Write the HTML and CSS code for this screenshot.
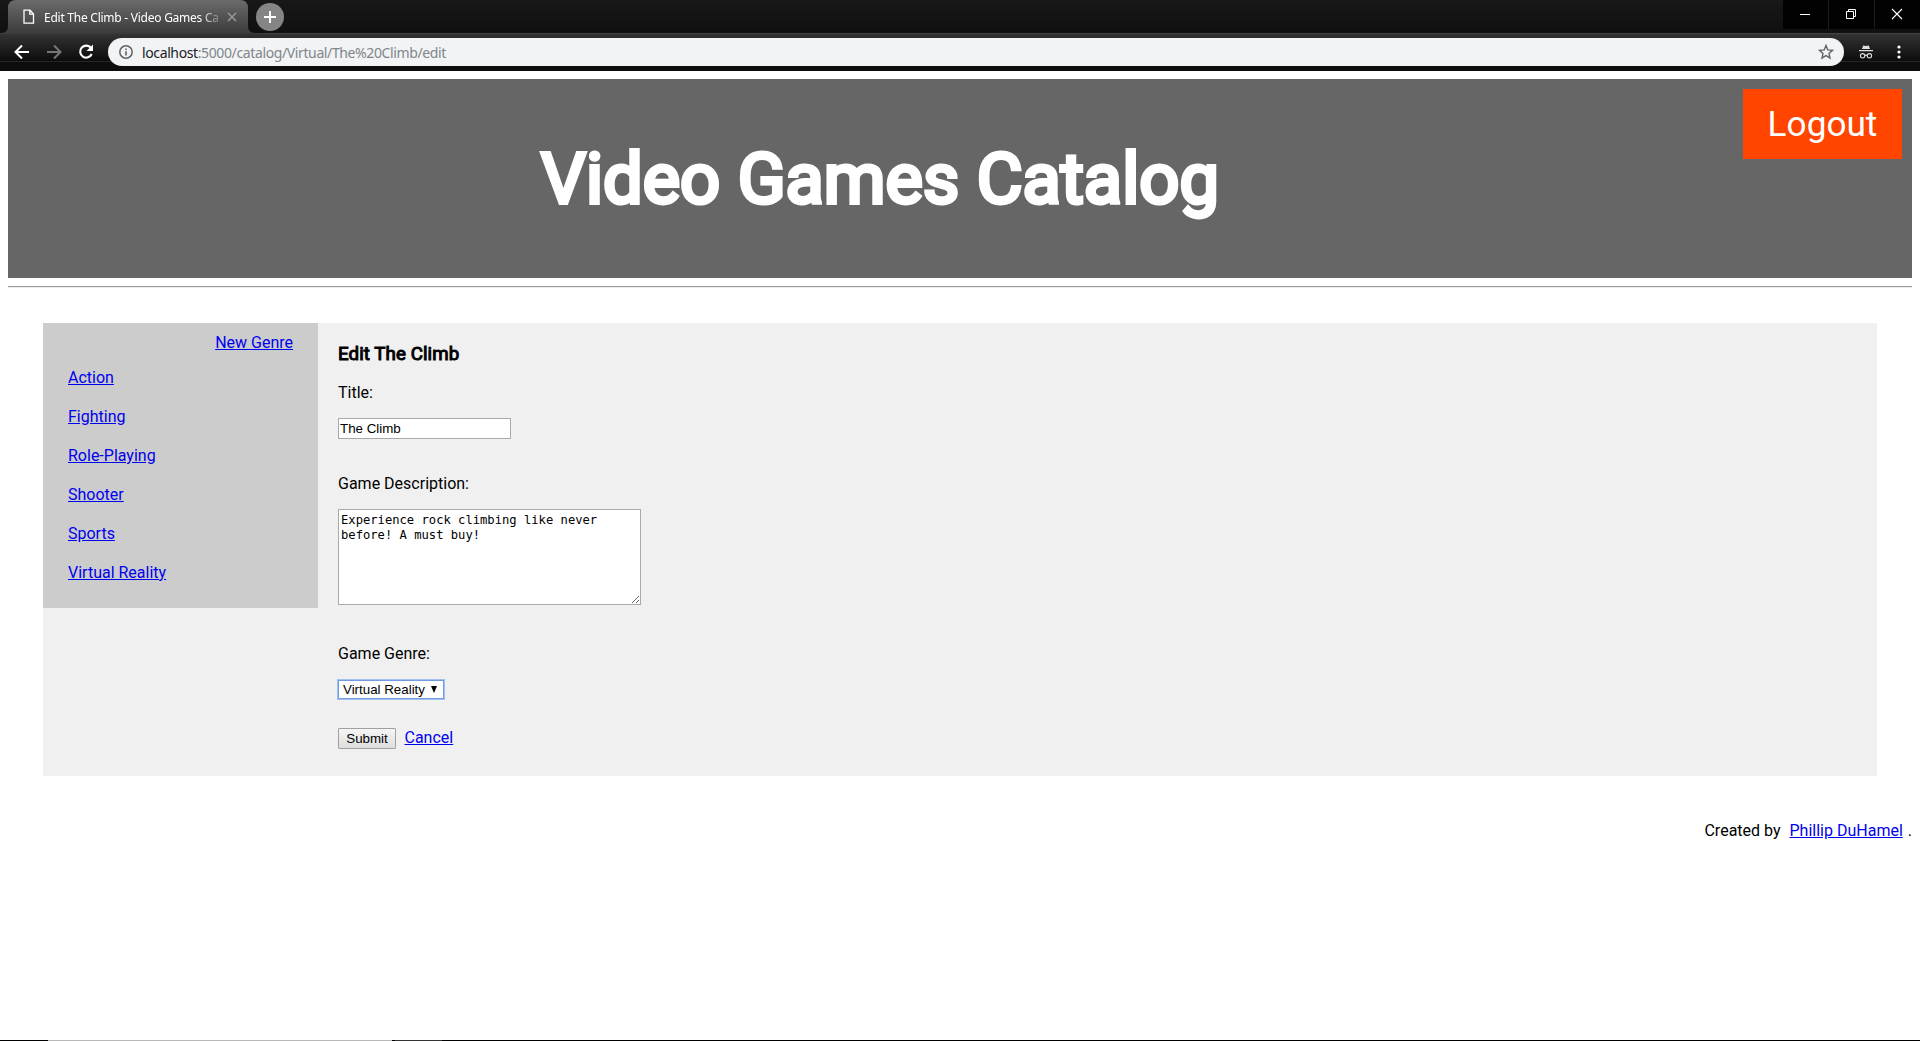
FILE: index.html
```html
<!DOCTYPE html>
<html lang="en">
<head>
<meta charset="utf-8">
<title>Edit The Climb - Video Games Catalog</title>
<link rel="stylesheet" href="styles.css">
</head>
<body>
<div class="browser">
  <div class="tabs">
    <div class="tab">
      <svg class="tab-edge" width="264" height="34" viewBox="0 0 264 34">
        <defs><linearGradient id="tabfill" x1="0" y1="0" x2="0" y2="1"><stop offset="0" stop-color="#6b6b6b"/><stop offset="1" stop-color="#3a3a3a"/></linearGradient></defs>
        <path d="M0 33H1Q8 33 8 26V8Q8 0 16 0H240Q248 0 248 8V26Q248 33 255 33H264V34H0Z" fill="url(#tabfill)"/>
      </svg>
      <svg class="tab-file" width="12" height="16" viewBox="0 0 12 16" fill="none" stroke="#fff" stroke-width="1.3"><path d="M1 1.2H7L10.5 5V14.2H1ZM6.8 1.2V5.2H10.5"/></svg>
      <span class="tab-title">Edit The Climb - Video Games Ca</span>
      <svg class="tab-close" width="10" height="10" viewBox="0 0 10 10" stroke="#999" stroke-width="1.5"><path d="M1 1L9 9M9 1L1 9"/></svg>
    </div>
    <svg class="new-tab" width="28" height="28" viewBox="0 0 28 28"><circle cx="14" cy="14" r="14" fill="#858585"/><path d="M14 8V20M8 14H20" stroke="#fff" stroke-width="2"/></svg>
    <div class="window-buttons">
      <svg width="45" height="29" viewBox="0 0 45 29" stroke="#fff"><path d="M17 14.5H27"/></svg>
      <svg width="45" height="29" viewBox="0 0 45 29" stroke="#fff" fill="none"><path d="M17.500 11.500H24.500V18.500H17.500ZM19.500 11.500V9.500H26.500V16.500H24.500"/></svg>
      <svg width="45" height="29" viewBox="0 0 45 29" stroke="#fff" stroke-width="1.100"><path d="M17 9L27 19M27 9L17 19"/></svg>
    </div>
  </div>
  <div class="toolbar">
    <svg class="back" width="16" height="16" viewBox="0 0 16 16" fill="none" stroke="#fff" stroke-width="2"><path d="M15 8H2M8 1.500L1.500 8L8 14.500"/></svg>
    <svg class="forward" width="16" height="16" viewBox="0 0 16 16" fill="none" stroke="#777" stroke-width="2"><path d="M1 8H14M8 1.500L14.500 8L8 14.500"/></svg>
    <svg class="reload" width="16" height="16" viewBox="0 0 16 16"><path d="M13 4A6 6 0 1 0 13.700 10" fill="none" stroke="#fff" stroke-width="2.100"/><path d="M15 0.500V7H8.500Z" fill="#fff"/></svg>
    <div class="address">
      <svg width="14" height="14" viewBox="0 0 14 14"><circle cx="7" cy="7" r="6.200" fill="none" stroke="#5f6368" stroke-width="1.500"/><path d="M7 6.200V10.500M7 3.500V5" stroke="#5f6368" stroke-width="1.600"/></svg>
      <span class="url">localhost<span>:5000/catalog/Virtual/The%20Climb/edit</span></span>
      <svg class="star" width="16" height="16" viewBox="0 0 16 16"><path d="M8 1.500L9.800 5.900L14.500 6.300L11 9.400L12 14L8 11.600L4 14L5 9.400L1.500 6.300L6.200 5.900Z" fill="none" stroke="#5f6368" stroke-width="1.400"/></svg>
    </div>
    <svg class="incognito" width="14" height="14" viewBox="0 0 14 14"><path d="M4.200 0.500L7 1L9.800 0.500L11 4H3ZM0 5H14V6.200H0Z" fill="#ddd"/><g fill="none" stroke="#ddd" stroke-width="1.100"><circle cx="3.600" cy="10.800" r="2.200"/><circle cx="10.400" cy="10.800" r="2.200"/><path d="M5.800 10.500Q7 9.700 8.200 10.500"/></g></svg>
    <svg class="more" width="4" height="14" viewBox="0 0 4 14" fill="#fff"><circle cx="2" cy="2" r="1.600"/><circle cx="2" cy="7" r="1.600"/><circle cx="2" cy="12" r="1.600"/></svg>
  </div>
</div>
<div class="page">
  <header class="banner">
    <h1>Video Games Catalog</h1>
    <a class="logout">Logout</a>
  </header>
  <hr>
  <main class="catalog">
    <nav class="genres">
      <a class="new-genre" href="#">New Genre</a>
      <a href="#">Action</a>
      <a href="#">Fighting</a>
      <a href="#">Role-Playing</a>
      <a href="#">Shooter</a>
      <a href="#">Sports</a>
      <a href="#">Virtual Reality</a>
    </nav>
    <form class="edit">
      <h3>Edit The Climb</h3>
      <label>Title:</label>
      <input class="title" type="text" value="The Climb">
      <label>Game Description:</label>
      <textarea class="description">Experience rock climbing like never before! A must buy!</textarea>
      <label>Game Genre:</label>
      <div class="select"><span>Virtual Reality</span><svg width="6" height="7" viewBox="0 0 6 7"><path d="M0 0H6L3 7Z"/></svg></div>
      <div class="actions"><button type="button">Submit</button><a href="#">Cancel</a></div>
    </form>
  </main>
  <footer><span>Created by</span><a href="#">Phillip DuHamel</a><span>.</span></footer>
</div>
<div class="taskbar"><i></i><b></b></div>
</body>
</html>
```
FILE: styles.css
```css
* { box-sizing: border-box; }
body { margin: 0; height: 1041px; overflow: hidden; display: flex; flex-direction: column; background: #fff; color: #000; font: 16px/19px Roboto, sans-serif; }
svg { display: block; flex: none; }
a { color: #00e; text-decoration: underline; }

.browser { height: 71px; flex: none; background: #111; font-family: "Noto Sans", sans-serif; }
.tabs { height: 33px; display: flex; align-items: flex-start; background: linear-gradient(#181818, #101010); }
.tab { position: relative; width: 248px; height: 33px; padding: 1px 0 0 23px; display: flex; align-items: center; }
.tab-edge { position: absolute; left: 0; top: 0; }
.tab-file, .tab-title, .tab-close { position: relative; }
.tab-title { width: 175px; margin-left: 9px; white-space: nowrap; color: #fff; font-size: 12px; letter-spacing: -0.25px; -webkit-mask-image: linear-gradient(90deg, #000 155px, transparent 182px); mask-image: linear-gradient(90deg, #000 155px, transparent 182px); }
.tab-close { margin-left: 8px; }
.new-tab { margin: 3px 0 0 8px; }
.window-buttons { margin-left: auto; display: flex; gap: 1px; background: #1c1c1c; }
.window-buttons svg { background: #020202; }
.toolbar { height: 38px; padding-bottom: 1px; display: flex; align-items: center; border-top: 1px solid #444; background: linear-gradient(#333 0, #0c0c0c 27px, #262626 27px, #262626 28px, #0d0d0d 28px); }
.back { margin-left: 14px; }
.forward { margin-left: 16px; }
.reload { margin-left: 16px; }
.address { width: 1736px; height: 28px; margin-left: 14px; padding: 0 10px 0 11px; display: flex; align-items: center; border-radius: 14px; background: #f1f3f4; }
.url { margin-left: 9px; font-size: 14px; letter-spacing: -0.38px; color: #202124; }
.url span { color: #80868b; }
.star { margin-left: auto; }
.incognito { margin-left: 15px; }
.more { margin-left: 24px; }

.page { padding: 8px; flex: 1; }
.banner { height: 199px; padding: 10px; display: grid; grid-template-columns: 1fr 159px; background: #666; }
h1 { width: 1724px; margin: 48px 0 0; color: #fff; text-align: center; font-size: 70.4px; line-height: 84px; font-weight: 400; -webkit-text-stroke: 4px #fff; }
.logout { height: 70px; background: #ff4500; color: #fff; font-size: 35.2px; line-height: 70px; text-align: center; text-decoration: none; }
hr { height: 2px; margin: 8px 0 35px; border: 0; border-top: 1px solid #9a9a9a; border-bottom: 1px solid #eee; }
.catalog { height: 453px; margin: 0 35px; display: flex; align-items: flex-start; background: #f0f0f0; }
.genres { width: 275px; height: 285px; padding: 10px 25px; display: flex; flex-direction: column; align-items: flex-start; gap: 20px; background: #ccc; }
.new-genre { align-self: flex-end; margin-bottom: -4px; }
.edit { padding: 20px; display: flex; flex-direction: column; align-items: flex-start; }
h3 { margin: 0 0 17px; font-size: 18.72px; line-height: 23px; letter-spacing: 0.08px; font-weight: 400; -webkit-text-stroke: 1px #000; }
input, textarea { display: block; border: 1px solid #a9a9a9; outline: 0; background: #fff; color: #000; }
.title { width: 173px; height: 21px; margin: 16px 0 35px; padding: 1px; font: 13.333px "Liberation Sans", sans-serif; }
.description { width: 303px; height: 96px; margin: 16px 0 39px; padding: 3px 2px 2px; font: 12.170px/15px "DejaVu Sans Mono", monospace; }
.select { width: 106px; height: 19px; margin: 17px 0 29px; padding: 0 6px 0 4px; display: flex; align-items: center; justify-content: space-between; border: 1px solid #729ade; box-shadow: 0 0 0 1px #a3c0f3; background: #fff; font: 13.333px "Liberation Sans", sans-serif; }
.actions { display: flex; gap: 8.500px; }
button { width: 58px; height: 21px; padding: 0; border: 1px solid #a0a0a0; border-radius: 1px; background: linear-gradient(#f6f6f6, #ddd); color: #000; font: 13.333px "Liberation Sans", sans-serif; }
footer { margin-top: 45px; display: flex; justify-content: flex-end; }
footer a { margin: 0 5px 0 9px; }
.taskbar { height: 1px; flex: none; display: flex; background: #000; }
.taskbar i { width: 344px; margin-left: 48px; background: #b8b8b8; }
.taskbar b { width: 47px; margin-left: 3px; background: #333; }
```
